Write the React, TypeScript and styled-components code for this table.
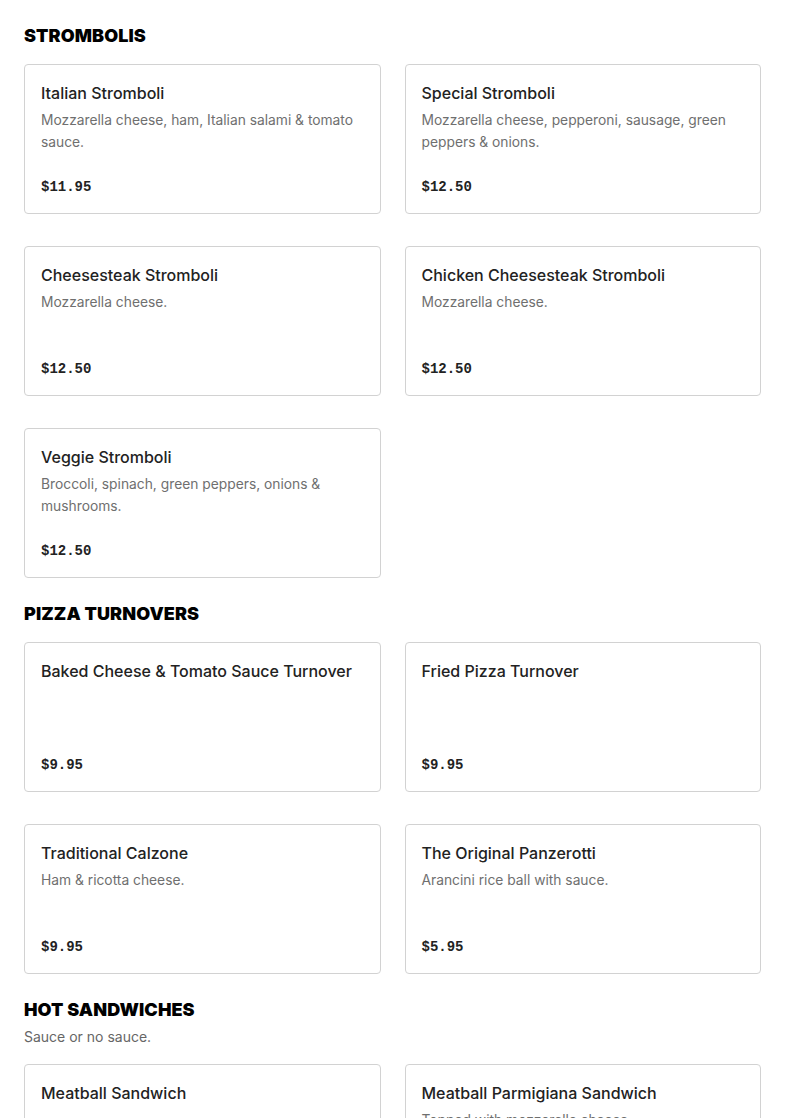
import React from 'react';
import styled, { createGlobalStyle } from 'styled-components';

const GlobalStyle = createGlobalStyle`
  body {
    margin: 0;
    background: #fff;
    font-family: Inter, "Liberation Sans", sans-serif;
    color: #222;
  }
`;

const Page = styled.main`
  padding: 24px 24px 0;
`;

const Section = styled.section`
  margin-bottom: 24px;
`;

const SectionTitle = styled.h2`
  margin: 0;
  font-family: Inter, "Liberation Sans", sans-serif;
  font-size: 18px;
  line-height: 24px;
  font-weight: 900;
  color: #000;
  letter-spacing: 0.1px;
`;

const SectionNote = styled.p`
  margin: 4px 0 0;
  font-size: 14px;
  line-height: 22px;
  color: #666;
`;

const Grid = styled.div`
  display: grid;
  grid-template-columns: 1fr 1fr;
  column-gap: 24px;
  row-gap: 32px;
  margin-top: 16px;
`;

const Card = styled.article`
  box-sizing: border-box;
  height: 150px;
  padding: 16px;
  border: 1px solid #d2d2d2;
  border-radius: 4px;
  display: flex;
  flex-direction: column;
`;

const ItemName = styled.h3`
  margin: 0;
  font-size: 16px;
  line-height: 24px;
  font-weight: 500;
  color: #222;
`;

const ItemDesc = styled.p`
  margin: 4px 0 0;
  font-size: 13.8px;
  line-height: 22px;
  color: #6f6f6f;
`;

const Price = styled.div`
  margin-top: auto;
  font-family: "Liberation Mono", "DejaVu Sans Mono", monospace;
  font-size: 14px;
  line-height: 20px;
  font-weight: 700;
  color: #222;
`;

type Item = { name: string; desc?: string; price?: string };
type MenuSection = { title: string; note?: string; items: Item[] };

const menu: MenuSection[] = [
  {
    title: 'STROMBOLIS',
    items: [
      { name: 'Italian Stromboli', desc: 'Mozzarella cheese, ham, Italian salami & tomato sauce.', price: '$11.95' },
      { name: 'Special Stromboli', desc: 'Mozzarella cheese, pepperoni, sausage, green peppers & onions.', price: '$12.50' },
      { name: 'Cheesesteak Stromboli', desc: 'Mozzarella cheese.', price: '$12.50' },
      { name: 'Chicken Cheesesteak Stromboli', desc: 'Mozzarella cheese.', price: '$12.50' },
      { name: 'Veggie Stromboli', desc: 'Broccoli, spinach, green peppers, onions & mushrooms.', price: '$12.50' },
    ],
  },
  {
    title: 'PIZZA TURNOVERS',
    items: [
      { name: 'Baked Cheese & Tomato Sauce Turnover', price: '$9.95' },
      { name: 'Fried Pizza Turnover', price: '$9.95' },
      { name: 'Traditional Calzone', desc: 'Ham & ricotta cheese.', price: '$9.95' },
      { name: 'The Original Panzerotti', desc: 'Arancini rice ball with sauce.', price: '$5.95' },
    ],
  },
  {
    title: 'HOT SANDWICHES',
    note: 'Sauce or no sauce.',
    items: [
      { name: 'Meatball Sandwich', price: '$9.95' },
      { name: 'Meatball Parmigiana Sandwich', desc: 'Topped with mozzarella cheese.', price: '$10.95' },
    ],
  },
];

const App: React.FC = () => {
  return (
    <>
      <GlobalStyle />
      <Page>
        {menu.map((section) => (
          <Section key={section.title}>
            <SectionTitle>{section.title}</SectionTitle>
            {section.note && <SectionNote>{section.note}</SectionNote>}
            <Grid>
              {section.items.map((item) => (
                <Card key={item.name}>
                  <ItemName>{item.name}</ItemName>
                  {item.desc && <ItemDesc>{item.desc}</ItemDesc>}
                  {item.price && <Price>{item.price}</Price>}
                </Card>
              ))}
            </Grid>
          </Section>
        ))}
      </Page>
    </>
  );
};

export default App;
